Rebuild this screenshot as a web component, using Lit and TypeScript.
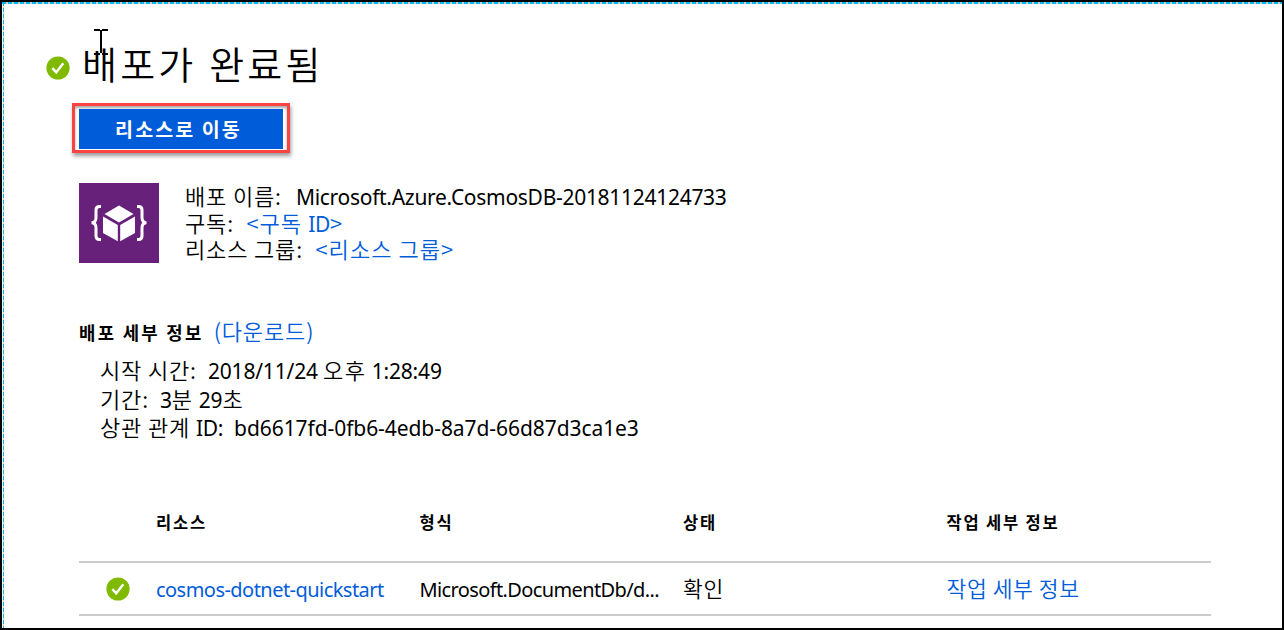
import { LitElement, html, css, svg } from "lit";
import { customElement } from "lit/decorators.js";

const check = html`<svg class="check" viewBox="0 0 24 24">
  <circle cx="12" cy="12" r="11.6" fill="#7fba00" />
  <path d="M6.4 12.2 L10.2 16.4 L17.3 7.3" fill="none" stroke="#fff" stroke-width="2.5" />
</svg>`;

@customElement("app-root")
export class AppRoot extends LitElement {
  static styles = css`
    :host { display: block; }
    .frame {
      position: relative;
      box-sizing: border-box;
      width: 1284px;
      height: 630px;
      border: 2px solid #000;
      background: #fff;
      color: #000;
      overflow: hidden;
      font-family: "Noto Sans", "Noto Sans CJK KR", sans-serif;
      font-size: 21px;
      white-space: nowrap;
      padding: 0 0 0 77px;
    }
    .dash-top, .dash-left { position: absolute; left: 0; top: 0; }
    .dash-top { right: 0; height: 2px; background: repeating-linear-gradient(90deg, #00b9f5 0 4px, #d0cdca 4px 6px); }
    .dash-left { left: 1px; bottom: 0; width: 1px; background: repeating-linear-gradient(180deg, #00b0ec 0 4px, #d8d4d0 4px 6px); }
    .cursor { position: absolute; left: 92px; top: 27px; width: 14px; height: 26px; }
    .check { display: block; width: 24px; height: 24px; flex: none; }
    .ko { font-family: "Noto Sans CJK KR", sans-serif; font-size: 22px; font-weight: 350; letter-spacing: 0.85px; }
    .lat { font-family: "Noto Sans", sans-serif; font-size: 21px; font-weight: 400; letter-spacing: -0.3px; }
    .link { color: #015cda; }
    .title { display: flex; align-items: center; margin-left: -33.5px; padding-top: 35.5px; height: 60px; }
    .title h1 { margin: -9px 0 0 12.5px; font: 350 38px/60px "Noto Sans CJK KR", sans-serif; letter-spacing: 3.2px; word-spacing: 1px; }
    .callout {
      box-sizing: border-box; width: 218px; height: 50px; margin: 5.5px 0 0 -7px;
      border: 3px solid #fa4343; box-shadow: 1px 3px 4px rgba(0,0,0,.4), inset 0 2px 3px rgba(0,0,0,.35);
      padding: 3px 4px 1px;
    }
    .button {
      display: block; width: 204px; height: 40px; padding: 0 5px 0 0; border: 0; background: #015cda; color: #fff;
      font: 700 19.5px/40px "Noto Sans CJK KR", sans-serif; letter-spacing: 2.1px;
    }
    .summary { display: flex; margin-top: 30px; height: 80px; }
    .tile { width: 80px; height: 80px; margin-right: 26px; }
    .lines { display: flex; flex-direction: column; margin-top: -1px; }
    .line { display: flex; align-items: baseline; height: 26.5px; line-height: 26px; }
    .v1 { margin-left: 12.5px; letter-spacing: 1.05px; }
    .name { margin-left: 14px; letter-spacing: -0.29px; }
    .details-head { display: flex; align-items: baseline; margin-top: 53px; height: 28px; line-height: 28px; }
    .bold { font: 700 16.5px/28px "Noto Sans CJK KR", sans-serif; letter-spacing: 1.8px; }
    .details-head .bold { font-size: 17.8px; letter-spacing: 2.3px; }
    .details-head .link { margin-left: 10px; }
    .details { margin: 12px 0 0 21px; }
    .details .line { height: 28.7px; }
    .v2 { margin-left: 11px; letter-spacing: -0.18px; }
    .v2 .ko { letter-spacing: 1.4px; }
    .guid { letter-spacing: -0.07px; }
    .table { width: 1132px; margin-top: 55px; }
    .row { display: grid; grid-template-columns: 77px 263.5px 263.5px 263.5px 1fr; align-items: center; box-sizing: border-box; border-bottom: 2px solid #ccc; height: 53px; }
    .row.head { height: 66px; padding-bottom: 14px; }
    .row .check { margin-left: 26.5px; }
    .row .ko { font-size: 21.5px; letter-spacing: 0.6px; margin-top: -2px; }
    .res { font-size: 20px; letter-spacing: -0.54px; padding-top: 1px; }
    .type { font-size: 20px; letter-spacing: -0.62px; padding-top: 1px; }
  `;

  render() {
    return html`
      <main class="frame">
        <div class="dash-top"></div>
        <div class="dash-left"></div>
        <header class="title">${check}<h1>배포가 완료됨</h1></header>
        <svg class="cursor" viewBox="0 0 14 26">
          <path d="M0 1 H6 M8 1 H14 M7 1 V24 M0 25 H6 M8 25 H14" fill="none" stroke="#000" stroke-width="2" />
        </svg>
        <div class="callout"><button class="button">리소스로 이동</button></div>
        <section class="summary">
          <svg class="tile" viewBox="0 0 80 80">
            <rect width="80" height="80" fill="#68217a" />
            ${svg`<g fill="#fff">
              <path d="M40 22.5 L54.5 31 L40 39.5 L25.5 31Z" />
              <path d="M24 33.5 L38.8 42 V58.3 L24 50Z" />
              <path d="M56 33.5 L41.2 42 V58.3 L56 50Z" />
            </g>
            <g fill="none" stroke="#fff" stroke-width="3">
              <path d="M22 23.5 H20.5 Q17 23.5 17 27 V34.5 Q17 39.8 12.5 39.8 Q17 39.8 17 45 V53 Q17 56.5 20.5 56.5 H22" />
              <path d="M58 23.5 H59.5 Q63 23.5 63 27 V34.5 Q63 39.8 67.5 39.8 Q63 39.8 63 45 V53 Q63 56.5 59.5 56.5 H58" />
            </g>`}
          </svg>
          <div class="lines">
            <div class="line"><span class="ko">배포 이름:</span><span class="name">Microsoft.Azure.CosmosDB-20181124124733</span></div>
            <div class="line"><span class="ko">구독:</span><span class="ko v1 link">&lt;구독 <span class="lat">ID</span>&gt;</span></div>
            <div class="line"><span class="ko">리소스 그룹:</span><span class="ko v1 link">&lt;리소스 그룹&gt;</span></div>
          </div>
        </section>
        <div class="details-head"><span class="bold">배포 세부 정보</span><span class="ko link">(다운로드)</span></div>
        <section class="details">
          <div class="line"><span class="ko">시작 시간:</span><span class="v2">2018/11/24 <span class="ko">오후</span> 1:28:49</span></div>
          <div class="line"><span class="ko">기간:</span><span class="v2">3<span class="ko">분</span> 29<span class="ko">초</span></span></div>
          <div class="line"><span class="ko">상관 관계 <span class="lat">ID:</span></span><span class="v2 guid">bd6617fd-0fb6-4edb-8a7d-66d87d3ca1e3</span></div>
        </section>
        <section class="table">
          <div class="row head"><span></span><span class="bold">리소스</span><span class="bold">형식</span><span class="bold">상태</span><span class="bold">작업 세부 정보</span></div>
          <div class="row">${check}<span class="link res">cosmos-dotnet-quickstart</span><span class="type">Microsoft.DocumentDb/d...</span><span class="ko">확인</span><span class="ko link">작업 세부 정보</span></div>
        </section>
      </main>
    `;
  }
}
